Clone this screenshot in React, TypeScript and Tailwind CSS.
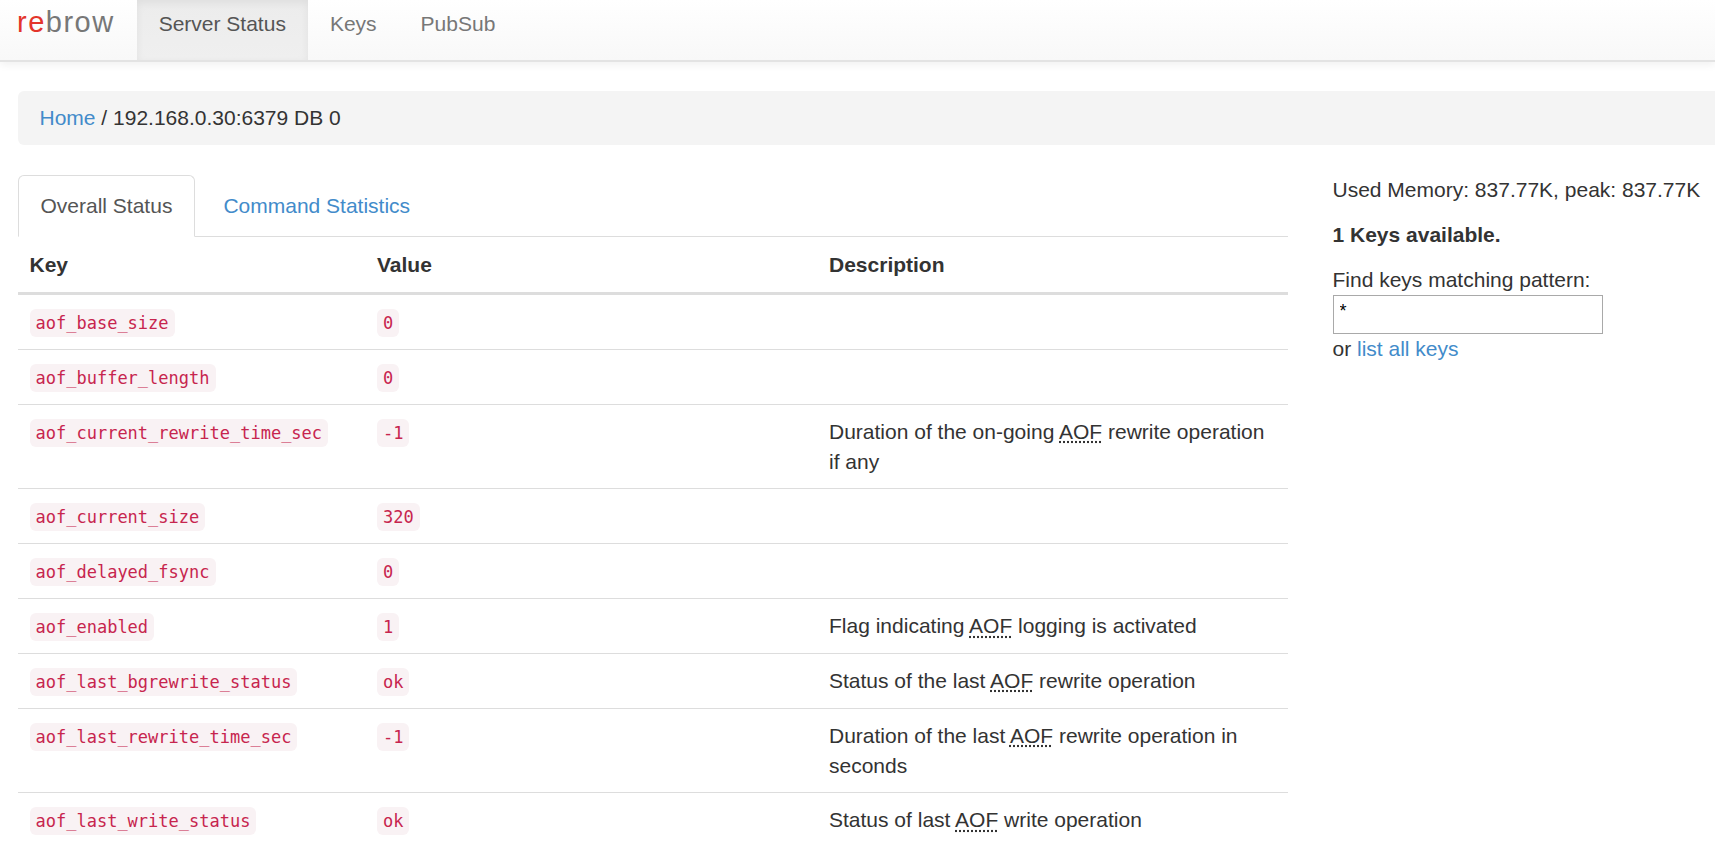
import React from 'react';

type Row = { key: string; value: string; desc?: string };

const rows: Row[] = [
  { key: 'aof_base_size', value: '0' },
  { key: 'aof_buffer_length', value: '0' },
  { key: 'aof_current_rewrite_time_sec', value: '-1', desc: 'Duration of the on-going AOF rewrite operation if any' },
  { key: 'aof_current_size', value: '320' },
  { key: 'aof_delayed_fsync', value: '0' },
  { key: 'aof_enabled', value: '1', desc: 'Flag indicating AOF logging is activated' },
  { key: 'aof_last_bgrewrite_status', value: 'ok', desc: 'Status of the last AOF rewrite operation' },
  { key: 'aof_last_rewrite_time_sec', value: '-1', desc: 'Duration of the last AOF rewrite operation in seconds' },
  { key: 'aof_last_write_status', value: 'ok', desc: 'Status of last AOF write operation' },
  { key: 'aof_pending_bio_fsync', value: '0' },
  { key: 'aof_pending_rewrite', value: '0' },
];

function Code({ children }: { children: React.ReactNode }) {
  return (
    <code className="inline-block align-top mt-[2px] px-[6px] py-[3px] rounded-[6px] bg-[#f9f2f4] text-[#c7254e] font-['DejaVu_Sans_Mono',monospace] text-[17px] leading-[22px]">
      {children}
    </code>
  );
}

// wrap every "AOF" in an abbr with the dotted underline
function Desc({ text }: { text?: string }) {
  if (!text) return null;
  const parts = text.split('AOF');
  return (
    <>
      {parts.map((p, i) => (
        <React.Fragment key={i}>
          {p}
          {i < parts.length - 1 && (
            <abbr title="Append Only File" className="underline decoration-dotted decoration-[#333] underline-offset-[3px]">
              AOF
            </abbr>
          )}
        </React.Fragment>
      ))}
    </>
  );
}

export default function App() {
  return (
    <div className="h-screen overflow-hidden bg-white font-['Liberation_Sans',Arial,sans-serif] text-[21px] leading-[30px] text-[#333]">
      <nav className="h-[62px] flex bg-gradient-to-b from-white to-[#f8f8f8] border-b-2 border-[#e3e3e3] shadow-[0_3px_8px_rgba(0,0,0,0.06)]">
        <a className="pl-[17px] pr-[22px] pt-[7px] text-[29px] leading-[30px] tracking-[1.5px] text-[#777]">
          <span className="text-[#e3342b]">re</span>brow
        </a>
        <a className="px-[22px] pt-[9px] text-[#555] bg-gradient-to-b from-[#ececec] to-[#efefef] shadow-[inset_0_3px_9px_rgba(0,0,0,0.06)]">
          Server Status
        </a>
        <a className="px-[22px] pt-[9px] text-[#777]">Keys</a>
        <a className="px-[22px] pt-[9px] text-[#777]">PubSub</a>
      </nav>

      <div className="pl-[17.5px] w-[1760px]">
        <div className="mt-[29px] h-[54px] px-[22px] py-[12px] rounded-[6px] bg-[#f4f4f4]">
          <a className="text-[#428bca]">Home</a>
          <span> / </span>
          <span>192.168.0.30:6379 DB 0</span>
        </div>

        <div className="mt-[30px] flex">
          <div className="w-[1270px] shrink-0">
            <ul className="flex border-b border-[#ddd]">
              <li className="-mb-px px-[22px] py-[15px] bg-white border border-[#ddd] border-b-transparent rounded-t-[6px] text-[#555]">
                Overall Status
              </li>
              <li className="ml-[5px] -mb-px px-[22px] py-[15px] border border-transparent text-[#428bca]">
                Command Statistics
              </li>
            </ul>

            <div className="grid grid-cols-[347.5px_452px_1fr] font-bold border-b-[3px] border-[#ddd]">
              <div className="px-[12px] pt-[13px] pb-[12px]">Key</div>
              <div className="px-[12px] pt-[13px] pb-[12px]">Value</div>
              <div className="px-[12px] pt-[13px] pb-[12px]">Description</div>
            </div>
            {rows.map((r, i) => (
              <div
                key={r.key}
                className={`grid grid-cols-[347.5px_452px_1fr] border-[#ddd] ${i === 0 ? 'border-t-0' : 'border-t'}`}
              >
                <div className="px-[12px] pt-[12px] pb-[11.8px]">
                  <Code>{r.key}</Code>
                </div>
                <div className="px-[12px] pt-[12px] pb-[11.8px]">
                  <Code>{r.value}</Code>
                </div>
                <div className="px-[12px] pt-[12px] pb-[11.8px]">
                  <Desc text={r.desc} />
                </div>
              </div>
            ))}
          </div>

          <div className="ml-[45px] w-[400px] shrink-0">
            <p className="mb-[15px]">Used Memory: 837.77K, peak: 837.77K</p>
            <p className="mb-[15px] font-bold">1 Keys available.</p>
            <p>Find keys matching pattern:</p>
            <input
              readOnly
              value="*"
              className="block w-[270px] h-[39px] px-[6px] pb-[6px] border border-[#a9a9a9] text-[18px] text-black outline-none"
            />
            <p>
              or <a className="text-[#428bca]">list all keys</a>
            </p>
          </div>
        </div>
      </div>
    </div>
  );
}
